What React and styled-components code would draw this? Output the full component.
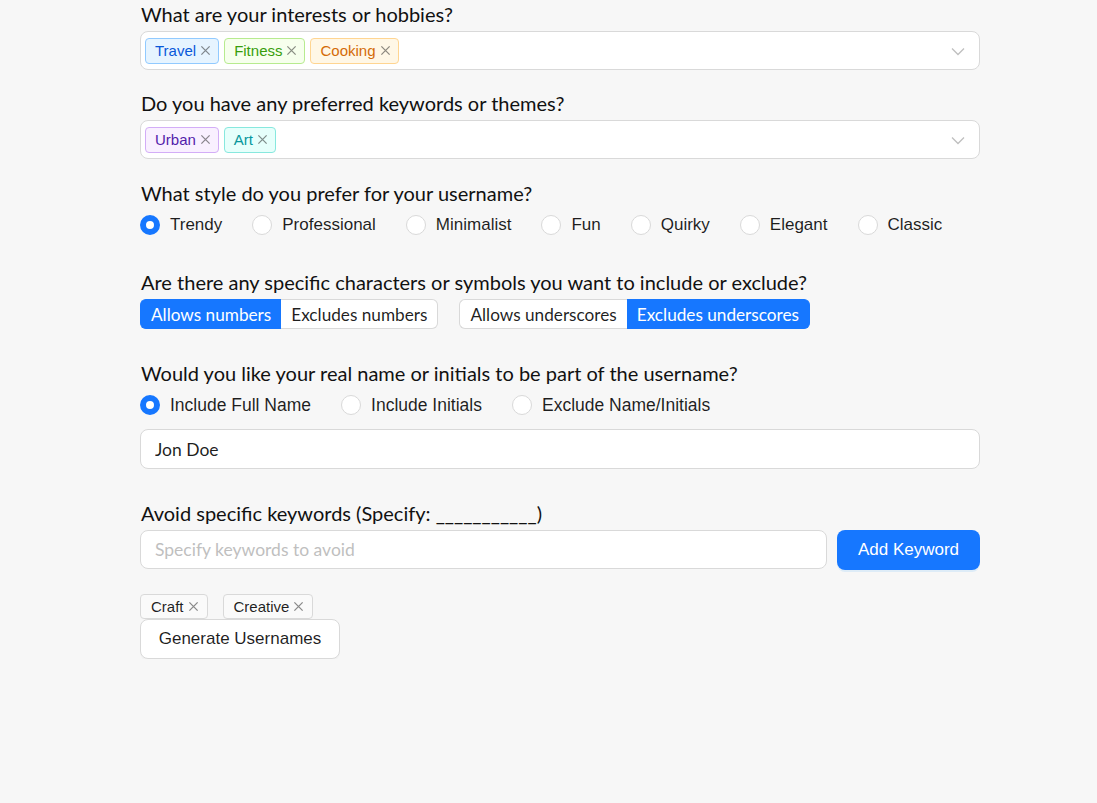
import React from 'react';
import styled, { createGlobalStyle } from 'styled-components';

const GlobalStyle = createGlobalStyle`
  body {
    margin: 0;
    background: #f7f7f7;
    font-family: "Lato", "Liberation Sans", sans-serif;
  }
`;

const tagColors = {
  blue: { bg: '#e6f4ff', border: '#91caff', text: '#0958d9' },
  green: { bg: '#f6ffed', border: '#b7eb8f', text: '#389e0d' },
  orange: { bg: '#fff7e6', border: '#ffd591', text: '#d46b08' },
  purple: { bg: '#f9f0ff', border: '#d3adf7', text: '#531dab' },
  cyan: { bg: '#e6fffb', border: '#87e8de', text: '#08979c' },
  plain: { bg: '#fafafa', border: '#d9d9d9', text: 'rgba(0,0,0,0.88)' },
};

const Page = styled.div`
  width: 840px;
  margin: 0 0 0 140px;
  padding-top: 1px;
`;

const Section = styled.div`
  margin-bottom: ${(p) => p.$gap}px;
`;

const Label = styled.div`
  font-family: "Lato", "Liberation Sans", sans-serif;
  font-size: 20px;
  line-height: 27px;
  color: #111;
  padding-left: 1px;
  margin-bottom: 3px;
`;

const SelectBox = styled.div`
  height: 39px;
  box-sizing: border-box;
  background: #fff;
  border: 1px solid #d9d9d9;
  border-radius: 8px;
  display: flex;
  align-items: center;
  padding: 0 14px 0 4px;
  gap: 5px;
`;

const Tag = styled.span`
  display: inline-flex;
  align-items: center;
  gap: 4px;
  height: ${(p) => (p.$small ? 25 : 26)}px;
  box-sizing: border-box;
  padding: ${(p) => (p.$small ? '0 8px 0 10px' : '0 7px 0 9px')};
  border-radius: 4px;
  font-family: "Liberation Sans", sans-serif;
  font-size: 15px;
  background: ${(p) => tagColors[p.$color].bg};
  border: 1px solid ${(p) => tagColors[p.$color].border};
  color: ${(p) => tagColors[p.$color].text};
`;

const Close = styled.svg`
  width: 11px;
  height: 11px;
  stroke: rgba(0, 0, 0, 0.45);
  stroke-width: 1.4;
  fill: none;
`;

const Chevron = styled.svg`
  margin-left: auto;
  width: 14px;
  height: 14px;
  stroke: #bfbfbf;
  stroke-width: 1.3;
  fill: none;
`;

const RadioRow = styled.div`
  display: flex;
  align-items: center;
  gap: 30px;
  height: 30px;
  margin-bottom: ${(p) => p.$gap || 0}px;
`;

const RadioItem = styled.label`
  display: flex;
  align-items: center;
  gap: 10px;
  font-family: "Liberation Sans", sans-serif;
  font-size: ${(p) => p.$size}px;
  color: rgba(0, 0, 0, 0.88);
`;

const Circle = styled.span`
  width: 20px;
  height: 20px;
  box-sizing: border-box;
  border-radius: 50%;
  background: #fff;
  border: ${(p) => (p.$checked ? '6px solid #1677ff' : '1px solid #d9d9d9')};
`;

const ButtonGroups = styled.div`
  display: flex;
  gap: 21px;
`;

const Segment = styled.div`
  display: flex;
`;

const SegButton = styled.button`
  height: 30px;
  padding: 0 10px;
  font-family: "Lato", "Liberation Sans", sans-serif;
  font-size: 17.2px;
  border: 1px solid ${(p) => (p.$active ? '#1677ff' : '#d9d9d9')};
  background: ${(p) => (p.$active ? '#1677ff' : '#fff')};
  color: ${(p) => (p.$active ? '#fff' : 'rgba(0,0,0,0.88)')};
  &:first-child {
    border-radius: 6px 0 0 6px;
    border-right: none;
  }
  &:last-child {
    border-radius: 0 6px 6px 0;
    border-left: none;
  }
`;

const TextInput = styled.input`
  width: 100%;
  height: ${(p) => p.$h || 40}px;
  box-sizing: border-box;
  border: 1px solid #d9d9d9;
  border-radius: 8px;
  background: #fff;
  padding: 0 14px;
  font-family: "Lato", "Liberation Sans", sans-serif;
  font-size: 17.5px;
  color: rgba(0, 0, 0, 0.88);
  &::placeholder {
    color: #bfbfbf;
  }
`;

const InputRow = styled.div`
  display: flex;
  gap: 10px;
`;

const PrimaryButton = styled.button`
  flex: 0 0 143px;
  height: 40px;
  border: none;
  border-radius: 8px;
  background: #1677ff;
  color: #fff;
  font-family: "Liberation Sans", sans-serif;
  font-size: 17px;
  box-shadow: 0 2px 0 rgba(5, 145, 255, 0.1);
`;

const TagList = styled.div`
  display: flex;
  gap: 15px;
`;

const DefaultButton = styled.button`
  width: 200px;
  height: 40px;
  border: 1px solid #d9d9d9;
  border-radius: 8px;
  background: #fff;
  color: rgba(0, 0, 0, 0.88);
  font-family: "Liberation Sans", sans-serif;
  font-size: 17px;
  box-shadow: 0 2px 0 rgba(0, 0, 0, 0.02);
`;

const X = () => (
  <Close viewBox="0 0 12 12">
    <path d="M1.5 1.5 10.5 10.5M10.5 1.5 1.5 10.5" />
  </Close>
);

const Down = () => (
  <Chevron viewBox="0 0 14 14">
    <path d="M1 4.5 7 10.5 13 4.5" />
  </Chevron>
);

const MultiSelect = ({ tags }) => (
  <SelectBox>
    {tags.map(([t, c]) => (
      <Tag key={t} $color={c}>
        {t}
        <X />
      </Tag>
    ))}
    <Down />
  </SelectBox>
);

const Radios = ({ items, gap, size = 17 }) => (
  <RadioRow $gap={gap}>
    {items.map((t, i) => (
      <RadioItem key={t} $size={size}>
        <Circle $checked={i === 0} />
        {t}
      </RadioItem>
    ))}
  </RadioRow>
);

export default function App() {
  return (
    <>
      <GlobalStyle />
      <Page>
        <Section $gap={20}>
          <Label>What are your interests or hobbies?</Label>
          <MultiSelect tags={[['Travel', 'blue'], ['Fitness', 'green'], ['Cooking', 'orange']]} />
        </Section>
        <Section $gap={21}>
          <Label>Do you have any preferred keywords or themes?</Label>
          <MultiSelect tags={[['Urban', 'purple'], ['Art', 'cyan']]} />
        </Section>
        <Section $gap={29}>
          <Label>What style do you prefer for your username?</Label>
          <Radios items={['Trendy', 'Professional', 'Minimalist', 'Fun', 'Quirky', 'Elegant', 'Classic']} />
        </Section>
        <Section $gap={31}>
          <Label>Are there any specific characters or symbols you want to include or exclude?</Label>
          <ButtonGroups>
            <Segment>
              <SegButton $active>Allows numbers</SegButton>
              <SegButton>Excludes numbers</SegButton>
            </Segment>
            <Segment>
              <SegButton>Allows underscores</SegButton>
              <SegButton $active>Excludes underscores</SegButton>
            </Segment>
          </ButtonGroups>
        </Section>
        <Section $gap={31}>
          <Label>Would you like your real name or initials to be part of the username?</Label>
          <Radios items={['Include Full Name', 'Include Initials', 'Exclude Name/Initials']} gap={9} size={17.5} />
          <TextInput defaultValue="Jon Doe" />
        </Section>
        <Section $gap={24}>
          <Label>Avoid specific keywords (Specify: ___________)</Label>
          <InputRow>
            <TextInput $h={39} placeholder="Specify keywords to avoid" />
            <PrimaryButton>Add Keyword</PrimaryButton>
          </InputRow>
        </Section>
        <TagList>
          <Tag $color="plain" $small>Craft<X /></Tag>
          <Tag $color="plain" $small>Creative<X /></Tag>
        </TagList>
        <DefaultButton>Generate Usernames</DefaultButton>
      </Page>
    </>
  );
}
